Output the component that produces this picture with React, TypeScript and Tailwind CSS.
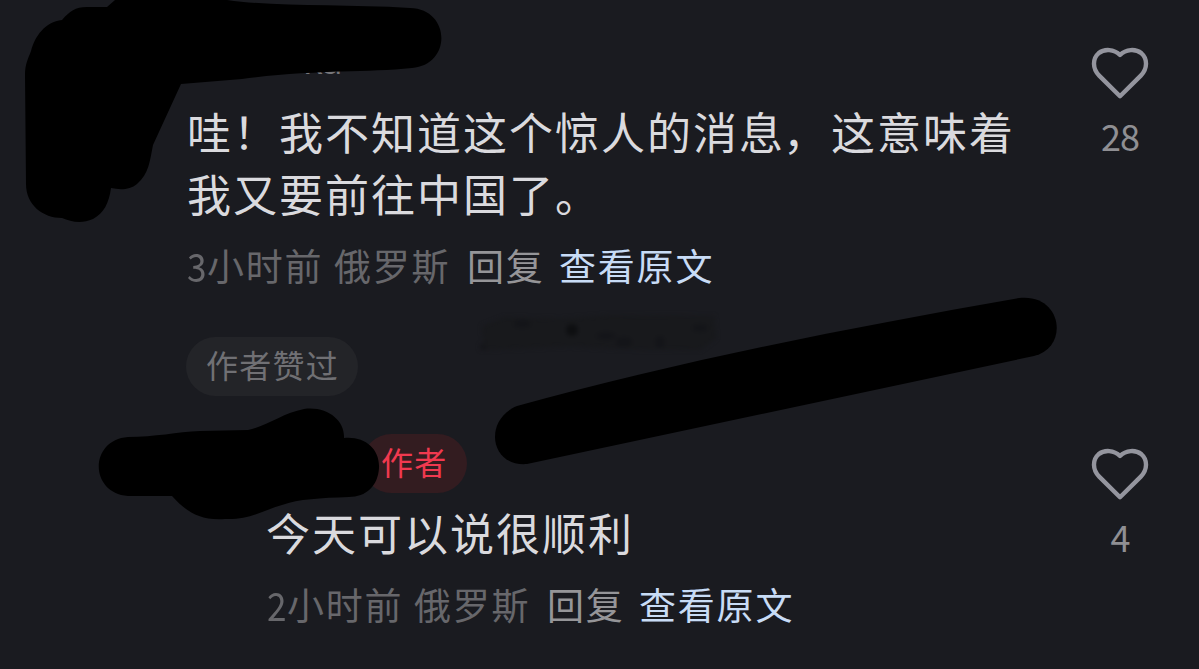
import React from "react";

function Heart() {
  return (
    <svg width="58" height="54" viewBox="0 0 58 54" fill="none" className="block">
      <path
        d="M29 50.2 L8.2 29.6 C1.2 22.5 1.5 12.5 7.5 7.3 C13.5 2.5 23 3 29 9 C35 3 44.5 2.5 50.5 7.3 C56.5 12.5 56.8 22.5 49.8 29.6 Z"
        stroke="#94959e"
        strokeWidth="4.4"
        strokeLinejoin="round"
      />
    </svg>
  );
}

function Likes({ count }: { count: string }) {
  return (
    <div className="flex w-[80px] flex-col items-center">
      <Heart />
      <span className="mt-[9px] text-[36px] leading-[52px] tracking-[-1px] text-[#8f8f93]">{count}</span>
    </div>
  );
}

function Meta({ digit, ago }: { digit: string; ago: string }) {
  return (
    <div className="flex h-[54px] items-center text-[37px] leading-[54px] tracking-[1.8px] whitespace-nowrap text-[#67676b]">
      <span className="w-[20px] origin-left scale-x-90 text-[39px] tracking-normal">{digit}</span>
      <span className="w-[127px]">{ago}</span>
      <span className="w-[133px]">俄罗斯</span>
      <span className="w-[92px] text-[#959598]">回复</span>
      <span className="text-[#c8dcf6]">查看原文</span>
    </div>
  );
}

export default function App() {
  return (
    <main className="relative h-[669px] w-[1199px] overflow-hidden bg-[#1a1b20] font-['Noto_Sans_CJK_SC',sans-serif]">
      <section className="flex h-[400px] justify-between pr-[39px] pl-[186px]">
        <div className="flex flex-col items-start">
          <div className="flex h-[100px] items-end pb-[13px] pl-[117px] font-['Noto_Sans',sans-serif] text-[37px] leading-[54px] text-[#77777b]">
            ка
          </div>
          <p className="pl-px text-[44px] leading-[62px] tracking-[2px] whitespace-nowrap text-[#dadade]">
            哇！我不知道这个惊人的消息<span className="relative -left-[2px]">，</span>这意味着
            <br />
            我又要前往中国了。
          </p>
          <div className="mt-[14px] pl-px">
            <Meta digit="3" ago="小时前" />
          </div>
          <div className="mt-[45px] flex h-[59px] w-[172px] items-center justify-center rounded-full bg-[#232428] pl-px text-[32px] leading-[59px] tracking-[1.2px] whitespace-nowrap text-[#707074]">
            <span className="-mt-[4px]">作者赞过</span>
          </div>
        </div>
        <div className="pt-[46px]">
          <Likes count="28" />
        </div>
      </section>

      <section className="flex h-[269px] justify-between pr-[39px] pl-[267px]">
        <div className="flex flex-col items-start pt-[34px]">
          <div className="ml-[95px] flex h-[59px] w-[105px] items-center rounded-full bg-[#331c20] pl-[19px] text-[32px] leading-[59px] tracking-[1.2px] whitespace-nowrap text-[#f0394f]">
            <span className="-mt-[4px]">作者</span>
          </div>
          <p className="mt-[8px] -ml-px text-[44px] leading-[62px] tracking-[2px] whitespace-nowrap text-[#dadade]">
            今天可以说很顺利
          </p>
          <div className="mt-[14px]">
            <Meta digit="2" ago="小时前" />
          </div>
        </div>
        <div className="pt-[47px]">
          <Likes count="4" />
        </div>
      </section>

      <svg className="pointer-events-none absolute inset-0" width="1199" height="669" viewBox="0 0 1199 669">
        <defs>
          <filter id="soft" x="-20%" y="-50%" width="140%" height="200%" colorInterpolationFilters="sRGB">
            <feGaussianBlur stdDeviation="2" />
          </filter>
        </defs>
        <g filter="url(#soft)" fill="#141519">
          <path d="M482 326 L505 317 L560 319 L610 315 L714 316 L716 338 L700 350 L620 349 L570 346 L484 350 Z" fill="#18191c" />
          <circle cx="572" cy="330" r="6" fill="#0e0f11" />
          <circle cx="483" cy="347" r="3" />
          <ellipse cx="522" cy="324" rx="9" ry="4" />
          <ellipse cx="606" cy="336" rx="10" ry="4" />
          <ellipse cx="624" cy="342" rx="8" ry="5" />
          <ellipse cx="660" cy="342" rx="5" ry="6" />
          <ellipse cx="700" cy="328" rx="8" ry="4" />
        </g>
        <g fill="#000">
          <path d="M115 0 L227 0 C275 7 340 4 410 8 C451 9 452 65 412 68 C365 73 315 69 242 79 L181 84 L153 145 C150 160 149 174 137 184 C130 190 120 190 111 188 C109 203 104 213 93 219 C82 224 71 222 62 218 C43 218 26 205 26 184 L25 75 C25 64 28 59 31 51 C35 36 45 22 62 20 C70 11 75 7 87 7 L107 7 Z" />
          <path d="M300 60 L345 60 L345 70.5 L300 73 Z" />
          <path d="M517 406 C680 361 852 327 1019 298 C1062 293 1070 347 1034 356 L527 464 C490 467 483 420 517 406 Z" />
          <path d="M128 437 C155 437 177 432 200 431 L248 430 C267 426 283 413 304 409 C328 406 345 421 344 438 C365 436 380 449 379 468 C378 486 366 497 349 497 C320 498 299 499 282 505 C264 510 250 520 225 519 C197 521 184 509 172 496 L128 496 C89 493 89 440 128 437 Z" />
        </g>
      </svg>
    </main>
  );
}
